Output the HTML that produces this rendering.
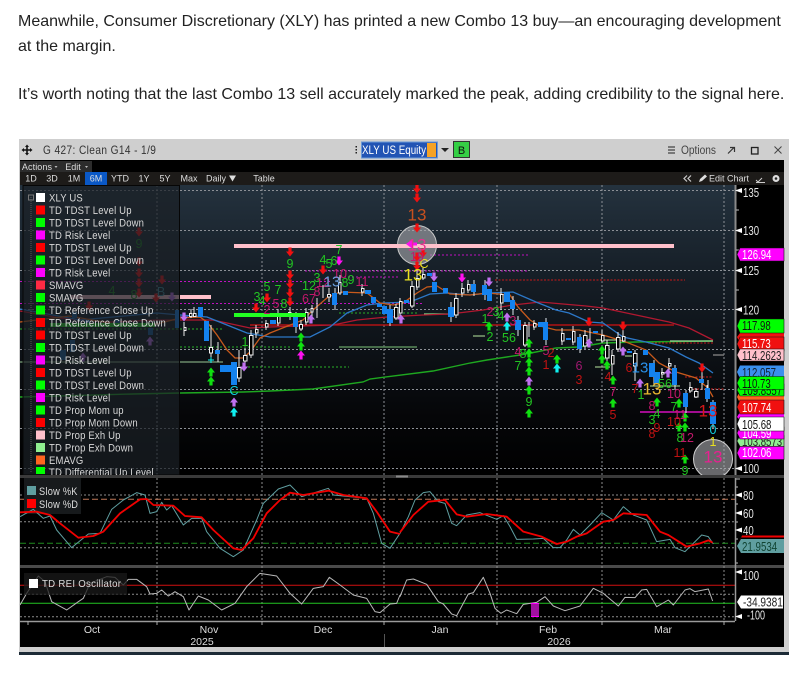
<!DOCTYPE html>
<html><head><meta charset="utf-8">
<style>
html,body{margin:0;padding:0;background:#fff;width:806px;height:676px;overflow:hidden}
p{position:absolute;left:18px;margin:0;font:16px/25px "Liberation Sans",Arial,sans-serif;color:#222;white-space:nowrap}
svg{position:absolute;left:0;top:0;filter:blur(.3px)}
text{font-family:"Liberation Sans",sans-serif}
.lg text{font-size:11px;fill:#d8d8d8;letter-spacing:.2px}
.ax text{font-size:12.5px;fill:#e6e6e6}
.lb text{font-size:12.5px}
.n text{font-size:12.5px;text-anchor:middle;dominant-baseline:central}
.tb text{font-size:9px;fill:#ddd;text-anchor:middle}
.g{fill:#22c422}.c{fill:#c0186a}.r{fill:#c01212}
</style></head><body>
<p style="top:9px">Meanwhile, Consumer Discretionary (XLY) has printed a new Combo 13 buy—an encouraging development<br>at the margin.</p>
<p style="top:82px">It’s worth noting that the last Combo 13 sell accurately marked the peak, adding credibility to the signal here.</p>
<svg width="806" height="676" viewBox="0 0 806 676">
<defs>
<linearGradient id="bg" x1="0" y1="0" x2="0" y2="1"><stop offset="0" stop-color="#24323e"/><stop offset=".35" stop-color="#141c24"/><stop offset=".8" stop-color="#050608"/><stop offset="1" stop-color="#000"/></linearGradient>
<path id="u" d="M0-4.500 4 .5H1.600V4.500H-1.600V.5H-4z"/>
<path id="d" d="M0 4.500 4-.5H1.600V-4.500H-1.600V-.5H-4z"/>
<clipPath id="cp"><rect x="20" y="185" width="715" height="290"/></clipPath>
<clipPath id="cl"><rect x="0" y="185" width="300" height="290"/></clipPath>
</defs>
<rect x="19" y="139" width="770" height="513" fill="#cfcfcf"/>
<rect x="19" y="652" width="770" height="3" fill="#1c2a36"/>
<rect x="20" y="160" width="764" height="487" fill="#000"/>
<!-- title -->
<path d="M27 146v8M23 150h8" stroke="#111" stroke-width="1.600"/><path d="M27 144.500l2 2.500h-4zM27 155.500l2-2.500h-4zM21.500 150l2.500-2v4zM32.500 150l-2.500-2v4z" fill="#111"/>
<text transform="translate(43 154) scale(.88 1)" font-size="11.500" fill="#333" letter-spacing=".45">G 427: Clean G14 - 1/9</text>
<rect x="355.500" y="146" width="1.500" height="1.500" fill="#222"/><rect x="355.500" y="149" width="1.500" height="1.500" fill="#222"/><rect x="355.500" y="152" width="1.500" height="1.500" fill="#222"/>
<rect x="361.500" y="142" width="76" height="16" fill="#2254b4" stroke="#6a9ad8"/>
<text x="362" y="154" font-size="11.500" fill="#fff" textLength="64" lengthAdjust="spacingAndGlyphs">XLY US Equity</text>
<rect x="427" y="143" width="9" height="14" fill="#f5a224"/>
<path d="M441 148h8l-4 4z" fill="#222"/>
<rect x="453.500" y="141.500" width="16" height="16" fill="#35cf45" stroke="#333"/>
<text x="461.500" y="154" font-size="11" fill="#111" text-anchor="middle">B</text>
<path d="M668 147h7M668 150h7M668 153h7" stroke="#444" stroke-width="1.200"/>
<text x="681" y="154" font-size="11.500" fill="#444" textLength="35" lengthAdjust="spacingAndGlyphs">Options</text>
<path d="M728 153.500l6-6M730 147.500h4.500v4.500" stroke="#333" stroke-width="1.200" fill="none"/>
<rect x="751.500" y="147.500" width="6.500" height="6.500" fill="none" stroke="#222" stroke-width="1.300"/>
<path d="M774.500 146.500l7 7M781.500 146.500l-7 7" stroke="#444"/>
<!-- toolbars -->
<rect x="20" y="161" width="72" height="11" fill="#2c2c2c"/>
<g class="tb"><text x="37" y="170" letter-spacing=".1">Actions</text><text x="73" y="170">Edit</text></g>
<path d="M54.500 166h3l-1.500 2zM85 166h3l-1.500 2z" fill="#bbb"/>
<rect x="20" y="172" width="764" height="13" fill="#1d1b19"/>
<rect x="85" y="172" width="22" height="13" fill="#0a58c6"/>
<g class="tb"><text x="31" y="181.500">1D</text><text x="52" y="181.500">3D</text><text x="74" y="181.500">1M</text><text x="96" y="181.500" fill="#fff">6M</text><text x="120" y="181.500">YTD</text><text x="144" y="181.500">1Y</text><text x="165" y="181.500">5Y</text><text x="189" y="181.500">Max</text><text x="216" y="181.500">Daily</text><text x="264" y="181.500">Table</text><text x="729" y="181.500" fill="#e8e8e8" font-size="10">Edit Chart</text></g>
<path d="M229 175.500h7l-3.500 6z" fill="#ddd"/>
<path d="M687 175.500l-3 3 3 3M691 175.500l-3 3 3 3" stroke="#ccc" fill="none" stroke-width="1.200"/>
<path d="M699 182l1-3 5-4.500 2 2-5 4.500z" fill="#ddd"/>
<path d="M756 180l2 2 4-4M756 182.500h9" stroke="#ccc" fill="none"/>
<circle cx="776" cy="178.500" r="3.500" fill="#ddd"/><circle cx="776" cy="178.500" r="1.300" fill="#222"/>
<!-- chart bg -->
<rect x="20" y="185" width="715" height="290" fill="url(#bg)"/>
<g clip-path="url(#cp)">
<path d="M20 190.500H735M20 230.500H735M20 270.500H735M20 309.500H735M20 349.500H735M20 389.500H735M20 428.500H735M20 468.500H735M157 185V475M262 185V475M384 185V475M497 185V475M602 185V475M724 185V475" stroke="#8c9096" stroke-dasharray="2 2" fill="none"/>
<!-- level lines -->
<path d="M430 255H528M305 271H528M20 281.500H330M340 277H400M20 303.500H424" stroke="#c010c0" stroke-dasharray="2 2" fill="none"/>
<path d="M495 280H685M648 343H713M690 389H725M685 377H712" stroke="#c81818" stroke-dasharray="2 1.500" fill="none"/>
<path d="M20 329H222M180 347H290M240 367H349M339 313H417" stroke="#28b028" stroke-dasharray="2 2" fill="none"/>
<path d="M339 347H417" stroke="#5a8a5a" stroke-width="1.500"/>
<path d="M20 362H223" stroke="#6a8a6a" stroke-width="1.500"/>
<path d="M424 314H450" stroke="#8ad88a" stroke-width="1.300"/>
<path d="M713 355H724" stroke="#777" stroke-width="1.500"/>
<path d="M473 336H485M596 340H620M595 367H610M625 356H632M650 386H680" stroke="#b8e8a0" stroke-width="1"/>
<path d="M640 412H713" stroke="#ff10e0" stroke-width="1.300"/>
<path d="M250 325H674" stroke="#d01212" stroke-width="1.300"/>
<path d="M20 397 133 394 180 393 243 392 270 391 313 389 363 382 370 379 433 371 470 363 487 360 520 355 536 352 556 348 579 347 603 343 636 342 713 341" stroke="#1ea820" stroke-width="1.400" fill="none"/>
<path d="M670 341H713" stroke="#9ad89a" stroke-width="1.200"/>
<path d="M20 311 60 318 110 322 157 320 180 320 213 320 250 328 270 327 333 325 357 320 387 317 423 315 450 314 483 310 513 305 540 302 586 306 603 308 636 315 669 322 689 328 713 340" stroke="#b01830" stroke-width="1.300" fill="none"/>
<path d="M20 309 80 320 157 313 180 315 207 317 227 325 247 333 270 337 310 337 330 327 347 313 367 305 383 303 410 302 430 294 447 293 470 295 490 293 513 292 536 302 556 310 569 313 589 322 603 323 623 337 646 342 669 348 686 357 699 363 713 373" stroke="#2c78c8" stroke-width="1.300" fill="none"/>
<path d="M20 322 70 316 120 325 157 324 180 318 200 317 207 322 217 335 227 350 235 358 243 358 250 352 260 338 270 333 303 320 313 310 328 297 340 292 367 293 380 303 393 305 403 303 417 293 427 287 437 286 450 294 470 295 487 293 510 295 518 307 530 320 540 326 556 330 579 330 603 335 626 342 646 350 659 363 676 372 696 378 708 388 713 397" stroke="#c85a1c" stroke-width="1.300" fill="none"/>
<!-- wicks -->
<path d="M184 322V336M191 309V318M194 307V317M211 325V360M218 342V362M239 350V382M245 348V368M251 330V358M256 325V338M266 320V330M278 309V326M290 307V320M301 320V331M306 308V325M312 305V320M317 298V318M323 285V298M329 288V302M340 275V295M362 284V296M396 304V320M400 298V316M412 281V308M417 270V290M423 268V280M456 293V318M462 283V297M468 280V293M501 288V310M525 322V347M529 322V337M534 320V330M562 328V345M573 326V345M585 330V349M590 328V340M602 330V343M607 340V365M612 350V375M618 332V352M623 330V342M635 350V381M662 368V378M669 358V370M690 382V393M696 388V398M702 372V390M708 380V390" stroke="#e8e8e8" stroke-width="1" fill="none"/>
<path d="M296 312V333M335 288V310M390 305V326M451 302V322M474 280V296M485 280V300M513 296V315M518 316V336M546 318V345M580 334V353M654 360V386M675 365V390M686 390V413M707 385V402M713 400V428" stroke="#dfe8ef" stroke-width="1" fill="none"/>
<!-- blue bodies -->
<path d="M198 307h5v10h-5zM204 321h5v20h-5zM215 350h5v4h-5zM220 365h11v7h-11zM231 362h6v23h-6zM175 310h5v18h-5zM293 317h5v10h-5zM270 320h6v4h-6zM332 293h5v12h-5zM343 291h5v4h-5zM365 290h6v4h-6zM371 297h5v6h-5zM377 304h5v3h-5zM382 306h5v8h-5zM387 309h6v14h-6zM404 300h5v3h-5zM427 273h5v3h-5zM432 282h5v10h-5zM443 288h5v5h-5zM448 307h6v10h-6zM471 284h5v8h-5zM482 285h5v10h-5zM487 289h5v12h-5zM504 292h6v10h-6zM510 300h5v9h-5zM515 320h6v10h-6zM538 322h5v5h-5zM543 322h5v18h-5zM566 338h5v2h-5zM577 337h5v12h-5zM593 331h5v2h-5zM627 351h5v2h-5zM643 350h5v5h-5zM649 363h6v14h-6zM654 372h6v11h-6zM672 368h5v17h-5zM683 393h5v14h-5zM699 379h5v4h-5zM705 388h5v11h-5zM710 402h6v22h-6z" fill="#1482ef"/>
<path d="M148 328h5v7h-5zM72 312h5v6h-5zM85 320h5v7h-5zM115 320h5v6h-5zM60 350h6v10h-6zM70 340h5v12h-5z" fill="#155a9c"/>
<!-- white bodies -->
<path d="M189.500 313.500h2.500v3h-2.500zM193.500 313.500h2.500v3h-2.500zM184 327.500h2v3h-2zM209.500 347.500h3v5.500h-3zM237.500 367.500h3.500v10.500h-3.500zM243.500 355.500h3.500v5.500h-3.500zM249.500 335.500h3.500v19.500h-3.500zM255.500 329.500h2.500v3.500h-2.500zM265.500 323.500h2.500v3.500h-2.500zM277.500 313.500h2.500v9.500h-2.500zM288.500 312.500h2.500v2h-2.500zM299.500 324.500h3v4.500h-3zM305.500 312.500h2.500v9.500h-2.500zM311 308.500h2v3.500h-2zM327.500 294.500h3v2.500h-3zM338.500 282.500h2.500v10.500h-2.500zM361.500 288.500h2.500v3.500h-2.500zM394.500 307.500h3.500v10.500h-3.500zM399.500 301.500h2.500v11.500h-2.500zM410.500 286.500h3.500v19.500h-3.500zM416.500 278.500h2.500v8.500h-2.500zM422.500 274.500h2.500v3.500h-2.500zM454.500 298.500h3.500v16.500h-3.500zM461.500 288.500h2.500v4.500h-2.500zM467.500 284.500h2.500v5.500h-2.500zM500.500 294.500h2.500v8.500h-2.500zM523.500 325.500h3.500v19.500h-3.500zM533.500 323.500h2.500v3.500h-2.500zM561.500 333.500h2.500v7.500h-2.500zM572.500 331.500h2.500v10.500h-2.500zM583.500 335.500h3.500v10.500h-3.500zM601.500 335.500h2.500v5.500h-2.500zM605.500 345.500h3.500v12.500h-3.500zM611.500 355.500h2.500v8.500h-2.500zM616.500 337.500h3.500v11.500h-3.500zM622.500 336.500h2.500v4.500h-2.500zM633.500 353.500h3.500v12.500h-3.500zM661.500 372.500h2.500v1.500h-2.500zM668.500 363.500h2.500v2.500h-2.500zM689.500 387.500h2.500v3.500h-2.500zM694.500 391.500h3.500v5.500h-3.500z" fill="#000" stroke="#f0f0f0"/>
<!-- circles -->
<circle cx="417" cy="245" r="19.500" fill="#a8a8ac" fill-opacity=".62" stroke="#c8c8c8"/>
<circle cx="713" cy="459" r="19.500" fill="#a8a8ac" fill-opacity=".62" stroke="#d0d0d0"/>
<!-- thick bars -->
<rect x="180" y="295" width="31" height="4" fill="#ffc0cb"/>
<rect x="70" y="295" width="110" height="4" fill="#ffc0cb"/>
<rect x="234" y="244" width="440" height="4" fill="#ffc0cb"/>
<rect x="234" y="313" width="72" height="4" fill="#22ff22"/>
<rect x="50" y="323" width="105" height="4" fill="#22dd22"/>
<!-- arrows -->
<g fill="#f01010"><use href="#d" x="417" y="189"/><use href="#d" x="417" y="198"/><use href="#d" x="417" y="228"/><use href="#d" x="417" y="257"/><use href="#d" x="417" y="266"/><use href="#d" x="423" y="253"/><use href="#d" x="290" y="252"/><use href="#d" x="290" y="275"/><use href="#d" x="290" y="284"/><use href="#d" x="290" y="293"/><use href="#d" x="290" y="302"/><use href="#d" x="323" y="270"/><use href="#d" x="589" y="322"/><use href="#d" x="623" y="326"/><use href="#d" x="702" y="368"/><use href="#d" x="256" y="308"/><use href="#d" x="267" y="298"/><use href="#d" x="139" y="232"/><use href="#d" x="139" y="262"/><use href="#d" x="139" y="273"/><use href="#d" x="139" y="283"/><use href="#d" x="139" y="293"/><use href="#d" x="162" y="280"/><use href="#d" x="156" y="298"/><use href="#d" x="89" y="306"/></g>
<g fill="#c070f0"><use href="#d" x="434" y="277"/><use href="#d" x="489" y="282"/><use href="#d" x="172" y="297"/><use href="#d" x="184" y="317"/><use href="#d" x="244" y="367"/><use href="#u" x="311" y="319"/><use href="#u" x="401" y="319"/><use href="#u" x="507" y="317"/><use href="#u" x="234" y="402"/><use href="#u" x="529" y="381"/><use href="#u" x="589" y="343"/><use href="#u" x="623" y="351"/><use href="#u" x="640" y="383"/><use href="#u" x="668" y="373"/><use href="#u" x="150" y="341"/><use href="#u" x="83" y="357"/></g>
<g fill="#ff10f0"><use href="#d" x="339" y="261"/><use href="#d" x="462" y="278"/><use href="#u" x="301" y="355"/><path d="M406 244l6-4.500v3h5v3h-5v3z"/></g>
<g fill="#10f0f0"><use href="#u" x="234" y="412"/><use href="#u" x="507" y="326"/><use href="#u" x="557" y="368"/><path d="M208 360h6M211 357v6" stroke="#10f0f0"/></g>
<g fill="#10e010"><use href="#u" x="301" y="337"/><use href="#u" x="301" y="346"/><use href="#u" x="211" y="372"/><use href="#u" x="211" y="381"/><use href="#u" x="489" y="326"/><use href="#u" x="529" y="343"/><use href="#u" x="529" y="353"/><use href="#u" x="529" y="362"/><use href="#u" x="529" y="371"/><use href="#u" x="529" y="390"/><use href="#u" x="529" y="413"/><use href="#u" x="557" y="359"/><use href="#u" x="602" y="350"/><use href="#u" x="602" y="359"/><use href="#u" x="607" y="365"/><use href="#u" x="613" y="380"/><use href="#u" x="613" y="403"/><use href="#u" x="657" y="402"/><use href="#u" x="679" y="403"/><use href="#u" x="685" y="417"/><use href="#u" x="679" y="427"/><use href="#u" x="685" y="427"/><use href="#u" x="685" y="459"/></g>
<!-- numbers -->
<g class="n">
<g class="g"><text x="290" y="264">9</text><text x="339" y="250">7</text><text x="323" y="260">4</text><text x="329" y="264">5</text><text x="334" y="261">6</text><text x="309" y="286">12</text><text x="317" y="278">3</text><text x="278" y="290">7</text><text x="284" y="304">8</text><text x="345" y="283">8</text><text x="351" y="280">9</text><text x="485" y="319">1</text><text x="496" y="312">3</text><text x="501" y="316">4</text><text x="490" y="337">2</text><text x="509" y="338">56</text><text x="523" y="354">8</text><text x="518" y="366">7</text><text x="529" y="402">9</text><text x="641" y="395">1</text><text x="657" y="414">4</text><text x="652" y="420">3</text><text x="665" y="384">56</text><text x="674" y="407">7</text><text x="680" y="438">8</text><text x="685" y="471">9</text><text x="257" y="297">3</text><text x="262" y="301">4</text><text x="267" y="287">5</text><text x="245" y="342">1</text><text x="112" y="291" style="fill:#1a8a1a">4</text><text x="134" y="295" style="fill:#1a8a1a">8</text><text x="139" y="244" style="fill:#1a8a1a">9</text></g>
<g class="c"><text x="276" y="304">5</text><text x="309" y="299">67</text><text x="317" y="292">8</text><text x="323" y="283">12</text><text x="340" y="274">10</text><text x="362" y="282">11</text><text x="490" y="312">2</text><text x="513" y="321">3</text><text x="518" y="352">4</text><text x="546" y="351">5</text><text x="613" y="392">7</text><text x="579" y="366" style="fill:#a01870">6</text><text x="652" y="406">8</text><text x="674" y="394">10</text><text x="680" y="415">11</text><text x="687" y="438">12</text><text x="267" y="310">2</text></g>
<g class="r"><text x="551" y="353">2</text><text x="546" y="365">1</text><text x="579" y="380">3</text><text x="608" y="377">4</text><text x="613" y="415">5</text><text x="629" y="368">6</text><text x="635" y="389">7</text><text x="657" y="428">9</text><text x="652" y="434">8</text><text x="674" y="422">10</text><text x="680" y="453">11</text></g>
<text x="417" y="215" fill="#c8501e" style="font-size:17px">13</text>
<text x="417" y="245" fill="#e83090" style="font-size:17px">13</text>
<text x="413" y="275" fill="#e8e020" style="font-size:17px">13</text>
<text x="424" y="264" fill="#e8e020">C</text>
<text x="417" y="257" fill="#c0186a">19</text>
<text x="332" y="282" fill="#6aa0e0" style="font-size:15px">13</text>
<text x="640" y="368" fill="#2a90e8" style="font-size:15px">13</text>
<text x="652" y="389" fill="#e8b830" style="font-size:17px">13</text>
<text x="708" y="411" fill="#d81818" style="font-size:17px">13</text>
<text x="713" y="457" fill="#e82090" style="font-size:17px">13</text>
<text x="713" y="430" fill="#10d0e0">0</text>
<text x="713" y="442" fill="#e8e020">1</text>
<text x="234" y="391" fill="#10d0e0">C</text>
<text x="161" y="292" fill="#3a8a9a">B</text>
</g>
</g>
<!-- legend -->
<rect x="23" y="185.500" width="156.500" height="289.500" fill="#1b2026" fill-opacity=".72" stroke="#060606"/>
<path d="M31 197V472" stroke="#555" stroke-dasharray="1 1"/>
<rect x="28.500" y="195" width="5" height="5" fill="none" stroke="#777"/>
<g>
<rect x="36" y="193" width="9" height="9" fill="#fff"/><rect x="36" y="205.500" width="9" height="9" fill="#f00"/><rect x="36" y="218" width="9" height="9" fill="#0f0"/><rect x="36" y="230.500" width="9" height="9" fill="#f0f"/><rect x="36" y="243" width="9" height="9" fill="#f00"/><rect x="36" y="255.500" width="9" height="9" fill="#0f0"/><rect x="36" y="268" width="9" height="9" fill="#f0f"/><rect x="36" y="280.500" width="9" height="9" fill="#ff2a44"/><rect x="36" y="293" width="9" height="9" fill="#0f0"/><rect x="36" y="305.500" width="9" height="9" fill="#0f0"/><rect x="36" y="318" width="9" height="9" fill="#f00"/><rect x="36" y="330.500" width="9" height="9" fill="#f00"/><rect x="36" y="343" width="9" height="9" fill="#0f0"/><rect x="36" y="355.500" width="9" height="9" fill="#f0f"/><rect x="36" y="368" width="9" height="9" fill="#f00"/><rect x="36" y="380.500" width="9" height="9" fill="#0f0"/><rect x="36" y="393" width="9" height="9" fill="#f0f"/><rect x="36" y="405.500" width="9" height="9" fill="#0f0"/><rect x="36" y="418" width="9" height="9" fill="#f00"/><rect x="36" y="430.500" width="9" height="9" fill="#ffc0cb"/><rect x="36" y="443" width="9" height="9" fill="#90ee90"/><rect x="36" y="455.500" width="9" height="9" fill="#ff6420"/><rect x="36" y="467" width="9" height="7" fill="#0f0"/>
</g>
<g clip-path="url(#cl)"><g class="lg" transform="translate(49 0) scale(.865 1)">
<text x="0" y="201.500">XLY US</text><text x="0" y="214">TD TDST Level Up</text><text x="0" y="226.500">TD TDST Level Down</text><text x="0" y="239">TD Risk Level</text><text x="0" y="251.500">TD TDST Level Up</text><text x="0" y="264">TD TDST Level Down</text><text x="0" y="276.500">TD Risk Level</text><text x="0" y="289">SMAVG</text><text x="0" y="301.500">SMAVG</text><text x="0" y="314">TD Reference Close Up</text><text x="0" y="326.500">TD Reference Close Down</text><text x="0" y="339">TD TDST Level Up</text><text x="0" y="351.500">TD TDST Level Down</text><text x="0" y="364">TD Risk Level</text><text x="0" y="376.500">TD TDST Level Up</text><text x="0" y="389">TD TDST Level Down</text><text x="0" y="401.500">TD Risk Level</text><text x="0" y="414">TD Prop Mom up</text><text x="0" y="426.500">TD Prop Mom Down</text><text x="0" y="439">TD Prop Exh Up</text><text x="0" y="451.500">TD Prop Exh Down</text><text x="0" y="464">EMAVG</text><text x="0" y="476">TD Differential Up Level</text>
</g></g>
<!-- axis main -->
<path d="M735.500 185V475" stroke="#8a8a8a" stroke-width="2"/>
<g fill="#fff"><path d="M735 190.500l7-2.500v5zM735 230.500l7-2.500v5zM735 270.500l7-2.500v5zM735 309.500l7-2.500v5zM735 468.500l7-2.500v5z"/><path d="M736 210h3M736 290h3M736 250h3" stroke="#bbb"/></g>
<g class="ax" transform="translate(743 0) scale(.77 1)"><text x="0" y="197">135</text><text x="0" y="235">130</text><text x="0" y="275">125</text><text x="0" y="314.500">120</text><text x="0" y="473">100</text></g>
<!-- price labels -->
<path d="M737 254.500l3-6.500h44v13h-44z" fill="#f0f" stroke="#111" stroke-width=".6"/>
<path d="M737 337l3-4h44v10h-44z" fill="#f01010"/>
<path d="M737 326l3-7h44v14h-44z" fill="#0f0" stroke="#111" stroke-width=".6"/>
<path d="M737 344l3-7h44v14h-44z" fill="#f01010" stroke="#111" stroke-width=".6"/>
<path d="M737 355l3-6h44v12h-44z" fill="#ffc0cb" stroke="#111" stroke-width=".6"/>
<path d="M737 372l3-6.500h44v13h-44z" fill="#3a90ee"/>
<path d="M737 397l3-6h44v12h-44z" fill="#ff6420"/>
<path d="M737 390l3-6h44v12h-44z" fill="#0f0" stroke="#111" stroke-width=".6"/>
<g class="lb" transform="translate(742 0) scale(.77 1)"><text x="0" y="259" fill="#fff">126.94</text><text x="0" y="330" fill="#111">117.98</text><text x="0" y="348" fill="#fff">115.73</text><text x="0" y="360" fill="#222">114.2623</text><text x="0" y="377" fill="#123">112.057</text><text x="0" y="395" fill="#111">109.8557</text></g>
<path d="M737 383l3-6.500h44v13h-44z" fill="#0f0" stroke="#111" stroke-width=".6"/>
<path d="M737 417l3-5h44v8h-44z" fill="#f0f"/>
<path d="M737 407l3-7h44v14h-44z" fill="#f01010" stroke="#111" stroke-width=".6"/>
<path d="M737 441l3-5.500h44v11h-44z" fill="#90ee90" stroke="#111" stroke-width=".6"/>
<g class="lb" transform="translate(742 0) scale(.77 1)"><text x="0" y="388" fill="#111">110.73</text><text x="0" y="412" fill="#fff">107.74</text><text x="0" y="446" fill="#222">103.8573</text></g>
<path d="M737 433l3-6h44v12h-44z" fill="#f0f" stroke="#111" stroke-width=".6"/>
<g class="lb" transform="translate(742 0) scale(.77 1)"><text x="0" y="438" fill="#fff">104.59</text></g>
<path d="M737 424l3-7h44v14h-44z" fill="#fff" stroke="#111" stroke-width=".6"/>
<path d="M737 453l3-6.500h44v13h-44z" fill="#f0f" stroke="#111" stroke-width=".6"/>
<g class="lb" transform="translate(742 0) scale(.77 1)"><text x="0" y="429" fill="#111">105.68</text><text x="0" y="457" fill="#fff">102.06</text></g>
<!-- separators -->
<rect x="20" y="475" width="764" height="3" fill="#3a3a3a"/><rect x="396" y="475.500" width="12" height="2" fill="#888"/>
<rect x="20" y="565" width="764" height="3" fill="#4a4a4a"/>
<!-- stoch -->
<path d="M20 495H735M20 521.700H735M20 547.700H735M20 594.300H735M20 616.700H735M157 478V621M262 478V621M384 478V621M497 478V621M602 478V621M724 478V621" stroke="#8c8c8c" stroke-dasharray="2 2" fill="none"/>
<path d="M20 499.300H735" stroke="#c07858" stroke-dasharray="6 3"/>
<path d="M20 543.300H735" stroke="#1f8a1f" stroke-dasharray="6 3"/>
<path d="M20 585.300H735" stroke="#d01010"/>
<path d="M20 603.300H735" stroke="#22c422"/>
<rect x="24" y="478" width="57" height="36" fill="#171a1c"/>
<rect x="27" y="486" width="9" height="9" fill="#5f9ea0"/><rect x="27" y="499" width="9" height="9" fill="#f00"/>
<g font-size="11" fill="#ddd"><text transform="translate(39 495) scale(.84 1)" letter-spacing=".3">Slow %K</text><text transform="translate(39 508) scale(.84 1)" letter-spacing=".3">Slow %D</text></g>
<g transform="translate(0,470) scale(.33333)" fill="none" stroke-linejoin="round">
<polyline stroke="#5f9ea0" stroke-width="3" points="60,140 100,118 130,145 150,138 170,180 215,233 265,192 300,190 335,118 370,90 410,68 435,75 450,130 470,125 485,97 500,120 515,107 550,165 575,145 605,145 620,185 660,235 700,260 730,240 770,150 790,100 835,57 870,45 905,80 985,55 1000,75 1100,85 1120,130 1145,220 1170,235 1200,190"/>
<polyline stroke="#f00000" stroke-width="5.500" points="60,127 110,125 150,135 180,160 235,203 280,198 310,185 360,130 420,88 440,87 460,105 520,107 555,138 605,142 640,180 700,235 725,240 760,205 800,130 840,90 870,68 910,75 985,62 1030,75 1100,85 1130,125 1170,185 1200,192"/>
<polyline stroke="#b8b8b8" stroke-width="3" points="60,405 80,370 115,318 135,335 155,395 200,420 235,395 250,385 270,340 320,320 345,322 370,345 385,328 410,328 440,350 450,372 470,370 485,360 505,378 525,365 550,380 567,420 595,378 625,390 665,420 705,400 740,350 780,310 830,318 870,370 905,402 940,355 970,350 988,322 1020,345 1060,375 1100,385 1125,425 1140,428 1170,402 1190,400 1200,375"/>
</g>
<g transform="translate(400,470) scale(.33333)" fill="none" stroke-linejoin="round">
<polyline stroke="#5f9ea0" stroke-width="3" points="0,190 25,140 45,90 70,68 90,65 115,95 135,100 155,160 170,167 200,135 240,128 290,148 310,137 330,170 350,208 400,207 430,205 460,233 480,233 500,210 520,178 540,195 570,165 605,128 640,150 670,110 700,135 740,150 770,215 810,208 825,233 855,245 905,195 925,200 940,222"/>
<polyline stroke="#f00000" stroke-width="5.500" points="0,187 40,135 85,95 135,90 170,133 200,140 260,132 320,140 370,185 425,200 470,222 500,215 530,200 560,190 610,155 640,150 670,130 740,135 780,185 805,195 860,230 900,220 925,211 938,218"/>
<polyline stroke="#b8b8b8" stroke-width="3" points="0,380 20,330 40,327 80,343 115,395 130,402 155,432 170,437 205,372 220,368 250,322 270,370 285,415 303,430 320,420 350,431 370,403 410,397 435,380 460,408 495,422 540,408 580,355 610,370 655,408 675,382 705,383 725,360 740,358 770,410 805,390 820,405 855,360 870,356 885,365 925,357 938,393"/>
</g>
<rect x="531" y="603" width="8" height="14" fill="#a010a0"/>
<path d="M531 603.500h8M531 616.500h8" stroke="#f0f"/>
<rect x="24" y="573" width="103" height="22" fill="#1a1a1a" fill-opacity=".75"/>
<rect x="29" y="579" width="9" height="9" fill="#fff"/>
<text transform="translate(42 587) scale(.92 1)" font-size="10.500" fill="#ddd" letter-spacing=".3">TD REI Oscillator</text>
<!-- axis lower -->
<path d="M735.500 478V621M20 621.500H735" stroke="#9a9a9a" stroke-width="1.500"/>
<path d="M735 495l7-2.500v5zM735 513l7-2.500v5zM735 530l7-2.500v5zM735 572l7-2.500v5zM735 616.500l7-2.500v5z" fill="#fff"/>
<path d="M736 479h4M736 487h2M736 504h2M736 522h2M736 539h2M736 563h2" stroke="#bbb"/>
<g class="ax" transform="translate(743 0) scale(.77 1)"><text x="0" y="500">80</text><text x="0" y="518">60</text><text x="0" y="535">40</text><text x="0" y="580">100</text></g>
<g class="ax" transform="translate(747 0) scale(.72 1)"><text x="0" y="619.500">-100</text></g>
<path d="M738 545l3-7.500h43v-2h-42z" fill="#f00000"/>
<path d="M737 546l4-7h43v14h-43z" fill="#5f9ea0"/>
<text transform="translate(742 551) scale(.78 1)" font-size="12.500" fill="#143">21.9534</text>
<path d="M737 602l4-6.500h42v13h-42z" fill="#fff"/>
<text transform="translate(743 606.500) scale(.81 1)" font-size="12.500" fill="#222">-34.9381</text>
<path d="M28 621v4M157 621v4M262 621v4M384 621v4M497 621v4M602 621v4M724 621v4" stroke="#aaa"/>
<path d="M384.500 634V647" stroke="#555"/>
<g font-size="10.500" fill="#ddd" text-anchor="middle"><text x="92" y="633">Oct</text><text x="209" y="633">Nov</text><text x="323" y="633">Dec</text><text x="440" y="633">Jan</text><text x="548" y="633">Feb</text><text x="663" y="633">Mar</text><text x="202" y="645">2025</text><text x="559" y="645">2026</text></g>
</svg>
</body></html>
